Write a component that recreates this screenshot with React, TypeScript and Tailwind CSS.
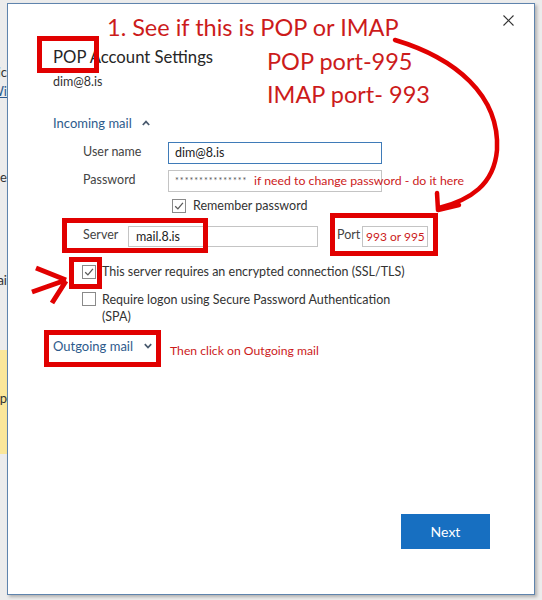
import React from "react";

function Check({ checked }: { checked?: boolean }) {
  return (
    <span className="w-[14px] h-[14px] border border-[#8a8a8a] bg-white flex items-center justify-center shrink-0">
      {checked && (
        <svg width="10" height="10" viewBox="0 0 10 10">
          <path d="M1.2 5.2 L3.9 7.9 L8.9 1.9" fill="none" stroke="#5a5a5a" strokeWidth="1.3" />
        </svg>
      )}
    </span>
  );
}

function Chevron({ up }: { up?: boolean }) {
  return (
    <svg width="8" height="6" viewBox="0 0 8 6">
      <path
        d={up ? "M0.8 5 L4 1.6 L7.2 5" : "M0.8 1.2 L4 4.6 L7.2 1.2"}
        fill="none"
        stroke="#4a5a6e"
        strokeWidth="1.7"
      />
    </svg>
  );
}

export default function App() {
  return (
    <div className="relative w-[542px] h-[600px] overflow-hidden bg-[#ececec] font-['Lato',sans-serif] flex">
      {/* background window strip */}
      <div className="w-[7px] h-full overflow-hidden flex flex-col text-[13px] leading-[16px] text-[#333]">
        <div className="mt-[64px] flex justify-end whitespace-nowrap">Informatic</div>
        <div className="mt-[3px] flex justify-end whitespace-nowrap text-[#2c5a8e] underline">Wi</div>
        <div className="mt-[70px] flex justify-end whitespace-nowrap">time</div>
        <div className="mt-[87px] flex justify-end whitespace-nowrap">mai</div>
        <div className="mt-[62px] h-[104px] bg-[#fbe79a] flex flex-col">
          <div className="mt-[40px] flex justify-end whitespace-nowrap">exp</div>
        </div>
      </div>

      {/* dialog */}
      <div className="mt-[3px] w-[528px] h-[592px] bg-white border border-[#5f84ad] shadow-[2px_2px_3px_rgba(0,0,0,0.25)] flex flex-col">
        <div className="flex justify-end pt-[11px] pr-[20px] h-[22px]">
          <svg width="11" height="11" viewBox="0 0 11 11">
            <path d="M0.5 0.5 L10.5 10.5 M10.5 0.5 L0.5 10.5" stroke="#333" strokeWidth="1.1" />
          </svg>
        </div>
        <div className="pl-[45px] flex flex-col">
          <div className="mt-[19px] text-[16.7px] leading-[24px] text-[#262626]">POP Account Settings</div>
          <div className="mt-[5px] text-[12.5px] leading-[16px] text-[#333]">dim@8.is</div>
          <div className="mt-[24px] flex items-center gap-[10px] text-[13px] leading-[18px] text-[#2e5b8c]">
            <span>Incoming mail</span>
            <Chevron up />
          </div>

          <div className="pl-[30px] flex flex-col text-[12.5px] leading-[16px] text-[#444]">
            <div className="mt-[10px] flex items-center h-[22px]">
              <span className="w-[85px] pb-[3px]">User name</span>
              <div className="w-[214px] h-[22px] border border-[#3f7bb8] pl-[6px] flex items-center text-[#222]">dim@8.is</div>
            </div>
            <div className="mt-[6px] flex items-center h-[22px]">
              <span className="w-[85px] pb-[3px]">Password</span>
              <div className="w-[214px] h-[22px] border border-[#c4c4c4] pl-[6px] flex items-center text-[9px] tracking-[1px] text-[#555]">
                ***************
              </div>
            </div>
            <div className="mt-[6px] flex items-center ml-[89px] gap-[7px] text-[#333]">
              <Check checked />
              <span>Remember password</span>
            </div>
            <div className="mt-[12px] flex items-center h-[21px]">
              <span className="w-[45px] pb-[3px]">Server</span>
              <div className="w-[190px] h-[21px] border border-[#c4c4c4] pl-[7px] flex items-center text-[#222]">mail.8.is</div>
              <span className="ml-[19px] w-[25px] pb-[3px]">Port</span>
              <div className="w-[66px] h-[21px] border border-[#c4c4c4] pl-[3px] flex items-center whitespace-nowrap text-[12px] text-[#cc1b1b]">
                993 or 995
              </div>
            </div>
            <div className="mt-[17px] -ml-[1px] flex items-center gap-[6px] text-[#333]">
              <Check checked />
              <span>This server requires an encrypted connection (SSL/TLS)</span>
            </div>
            <div className="mt-[11px] -ml-[1px] flex items-start gap-[6px] text-[#333]">
              <span className="mt-[1px]">
                <Check />
              </span>
              <span className="leading-[17px]">
                Require logon using Secure Password Authentication
                <br />
                (SPA)
              </span>
            </div>
          </div>

          <div className="mt-[12px] flex items-center gap-[11px] text-[13px] leading-[18px] text-[#2e5b8c]">
            <span>Outgoing mail</span>
            <Chevron />
          </div>
        </div>
        <div className="flex-1" />
        <div className="flex justify-end pr-[44px] pb-[45px]">
          <div className="w-[89px] h-[35px] bg-[#176fc1] text-white text-[14px] flex items-center justify-center">Next</div>
        </div>
      </div>

      {/* annotations */}
      <div className="absolute inset-0 pointer-events-none">
        <div className="absolute left-[37px] top-[36px] w-[62px] h-[37px] border-[5px] border-[#e10000]" />
        <div className="absolute left-[62px] top-[218px] w-[146px] h-[35px] border-[5px] border-[#e10000]" />
        <div className="absolute left-[330px] top-[213px] w-[108px] h-[43px] border-[5px] border-[#e10000]" />
        <div className="absolute left-[69px] top-[257px] w-[33px] h-[32px] border-[5px] border-[#e10000]" />
        <div className="absolute left-[44px] top-[330px] w-[117px] h-[37px] border-[5px] border-[#e10000]" />

        <div className="absolute left-[107px] top-[16px] text-[23.5px] leading-[23.5px] text-[#cc1b1b] whitespace-nowrap">
          1. See if this is POP or IMAP
        </div>
        <div className="absolute left-[267px] top-[50px] text-[23.5px] leading-[23.5px] text-[#cc1b1b] whitespace-nowrap">
          POP port-995
        </div>
        <div className="absolute left-[267px] top-[83px] text-[23.5px] leading-[23.5px] text-[#cc1b1b] whitespace-nowrap">
          IMAP port- 993
        </div>
        <div className="absolute left-[254px] top-[174px] text-[12.3px] leading-[13px] text-[#cc1b1b] whitespace-nowrap">
          if need to change password - do it here
        </div>
        <div className="absolute left-[170px] top-[344px] text-[12.2px] leading-[13px] text-[#cc1b1b] whitespace-nowrap">
          Then click on Outgoing mail
        </div>

        <svg className="absolute left-0 top-0" width="542" height="600" viewBox="0 0 542 600">
          <path
            d="M395 40 C455 58 500 95 497 150 C494 185 470 200 439 208"
            fill="none"
            stroke="#e10000"
            strokeWidth="4.5"
            strokeLinecap="round"
          />
          <path d="M437 193 L438 210 L459 205" fill="none" stroke="#e10000" strokeWidth="4.5" strokeLinecap="round" strokeLinejoin="round" />
          <path d="M36 268 L66 280 M32 292 L66 280 M52 303 L66 281" fill="none" stroke="#e10000" strokeWidth="5" strokeLinecap="butt" />
        </svg>
      </div>
    </div>
  );
}
